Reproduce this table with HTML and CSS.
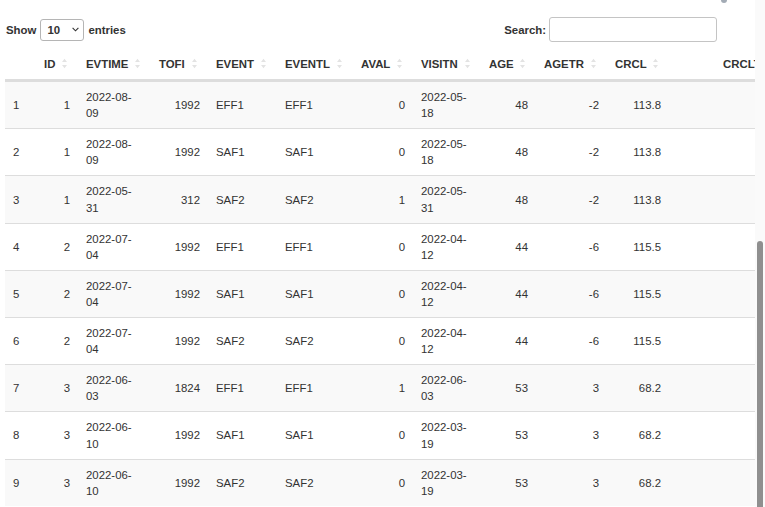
FILE: index.html
```html
<!DOCTYPE html>
<html lang="en">
<head>
<meta charset="utf-8">
<title>Data table</title>
<link rel="stylesheet" href="styles.css">
</head>
<body>
<div class="app">
  <main class="page">
    <div class="topline"><span class="blob"></span></div>
    <div class="controls">
      <label class="length">Show
        <span class="select"><span>10</span><svg width="7" height="5" viewBox="0 0 7 5"><path d="M0.6 0.8 L3.5 3.8 L6.4 0.8" fill="none" stroke="#333" stroke-width="1.1"/></svg></span>
        entries</label>
      <label class="filter">Search: <span class="input"></span></label>
    </div>
    <div class="scroll">
      <table class="dt">
        <colgroup>
          <col class="c-rn"><col class="c-id"><col class="c-evtime"><col class="c-tofi"><col class="c-event"><col class="c-eventl"><col class="c-aval"><col class="c-visitn"><col class="c-age"><col class="c-agetr"><col class="c-crcl"><col class="c-crcltr">
        </colgroup>
        <thead>
          <tr>
            <th class="rn"></th>
            <th>ID<svg class="sort" width="5" height="11" viewBox="0 0 5 11"><path d="M0 4 L2.5 0.8 L5 4Z M0 7 L2.5 10.2 L5 7Z"/></svg></th>
            <th>EVTIME<svg class="sort" width="5" height="11" viewBox="0 0 5 11"><path d="M0 4 L2.5 0.8 L5 4Z M0 7 L2.5 10.2 L5 7Z"/></svg></th>
            <th>TOFI<svg class="sort" width="5" height="11" viewBox="0 0 5 11"><path d="M0 4 L2.5 0.8 L5 4Z M0 7 L2.5 10.2 L5 7Z"/></svg></th>
            <th>EVENT<svg class="sort" width="5" height="11" viewBox="0 0 5 11"><path d="M0 4 L2.5 0.8 L5 4Z M0 7 L2.5 10.2 L5 7Z"/></svg></th>
            <th>EVENTL<svg class="sort" width="5" height="11" viewBox="0 0 5 11"><path d="M0 4 L2.5 0.8 L5 4Z M0 7 L2.5 10.2 L5 7Z"/></svg></th>
            <th>AVAL<svg class="sort" width="5" height="11" viewBox="0 0 5 11"><path d="M0 4 L2.5 0.8 L5 4Z M0 7 L2.5 10.2 L5 7Z"/></svg></th>
            <th>VISITN<svg class="sort" width="5" height="11" viewBox="0 0 5 11"><path d="M0 4 L2.5 0.8 L5 4Z M0 7 L2.5 10.2 L5 7Z"/></svg></th>
            <th>AGE<svg class="sort" width="5" height="11" viewBox="0 0 5 11"><path d="M0 4 L2.5 0.8 L5 4Z M0 7 L2.5 10.2 L5 7Z"/></svg></th>
            <th>AGETR<svg class="sort" width="5" height="11" viewBox="0 0 5 11"><path d="M0 4 L2.5 0.8 L5 4Z M0 7 L2.5 10.2 L5 7Z"/></svg></th>
            <th>CRCL<svg class="sort" width="5" height="11" viewBox="0 0 5 11"><path d="M0 4 L2.5 0.8 L5 4Z M0 7 L2.5 10.2 L5 7Z"/></svg></th>
            <th class="r">CRCLTR<svg class="sort" width="5" height="11" viewBox="0 0 5 11"><path d="M0 4 L2.5 0.8 L5 4Z M0 7 L2.5 10.2 L5 7Z"/></svg></th>
          </tr>
        </thead>
        <tbody>
          <tr><td>1</td><td class="r">1</td><td class="date">2022-08-<wbr>09</td><td class="r">1992</td><td>EFF1</td><td>EFF1</td><td class="r">0</td><td class="date">2022-05-<wbr>18</td><td class="r">48</td><td class="r">-2</td><td class="r">113.8</td><td class="r"></td></tr>
          <tr><td>2</td><td class="r">1</td><td class="date">2022-08-<wbr>09</td><td class="r">1992</td><td>SAF1</td><td>SAF1</td><td class="r">0</td><td class="date">2022-05-<wbr>18</td><td class="r">48</td><td class="r">-2</td><td class="r">113.8</td><td class="r"></td></tr>
          <tr><td>3</td><td class="r">1</td><td class="date">2022-05-<wbr>31</td><td class="r">312</td><td>SAF2</td><td>SAF2</td><td class="r">1</td><td class="date">2022-05-<wbr>31</td><td class="r">48</td><td class="r">-2</td><td class="r">113.8</td><td class="r"></td></tr>
          <tr><td>4</td><td class="r">2</td><td class="date">2022-07-<wbr>04</td><td class="r">1992</td><td>EFF1</td><td>EFF1</td><td class="r">0</td><td class="date">2022-04-<wbr>12</td><td class="r">44</td><td class="r">-6</td><td class="r">115.5</td><td class="r"></td></tr>
          <tr><td>5</td><td class="r">2</td><td class="date">2022-07-<wbr>04</td><td class="r">1992</td><td>SAF1</td><td>SAF1</td><td class="r">0</td><td class="date">2022-04-<wbr>12</td><td class="r">44</td><td class="r">-6</td><td class="r">115.5</td><td class="r"></td></tr>
          <tr><td>6</td><td class="r">2</td><td class="date">2022-07-<wbr>04</td><td class="r">1992</td><td>SAF2</td><td>SAF2</td><td class="r">0</td><td class="date">2022-04-<wbr>12</td><td class="r">44</td><td class="r">-6</td><td class="r">115.5</td><td class="r"></td></tr>
          <tr><td>7</td><td class="r">3</td><td class="date">2022-06-<wbr>03</td><td class="r">1824</td><td>EFF1</td><td>EFF1</td><td class="r">1</td><td class="date">2022-06-<wbr>03</td><td class="r">53</td><td class="r">3</td><td class="r">68.2</td><td class="r"></td></tr>
          <tr><td>8</td><td class="r">3</td><td class="date">2022-06-<wbr>10</td><td class="r">1992</td><td>SAF1</td><td>SAF1</td><td class="r">0</td><td class="date">2022-03-<wbr>19</td><td class="r">53</td><td class="r">3</td><td class="r">68.2</td><td class="r"></td></tr>
          <tr><td>9</td><td class="r">3</td><td class="date">2022-06-<wbr>10</td><td class="r">1992</td><td>SAF2</td><td>SAF2</td><td class="r">0</td><td class="date">2022-03-<wbr>19</td><td class="r">53</td><td class="r">3</td><td class="r">68.2</td><td class="r"></td></tr>
        </tbody>
      </table>
    </div>
  </main>
  <div class="vscroll"><div class="thumb"></div></div>
</div>
</body>
</html>
```

FILE: styles.css
```css
html, body {
  margin: 0;
  height: 100%;
  overflow: hidden;
  background: #fff;
}

body {
  font-family: "Liberation Sans", Arial, sans-serif;
  font-size: 11.4px;
  color: #333;
}

.app {
  display: flex;
  height: 507px;
}

.page {
  flex: none;
  width: 750px;
  padding-left: 5px;
}

.topline {
  height: 17px;
}

.blob {
  display: block;
  width: 6px;
  height: 3px;
  margin-left: 716px;
  background: #a3abb5;
  border-radius: 0 0 3px 3px;
}

.controls {
  display: flex;
  justify-content: space-between;
  align-items: center;
  height: 25px;
  padding-right: 38px;
}

.length {
  display: flex;
  align-items: center;
  gap: 4px;
  margin-left: 1px;
  font-weight: bold;
}

.select {
  display: flex;
  align-items: center;
  justify-content: space-between;
  box-sizing: border-box;
  width: 44px;
  height: 22px;
  padding: 0 4px 0 6px;
  border: 1px solid #b5b5b5;
  border-radius: 3px;
  background: #fff;
}

.filter {
  display: flex;
  align-items: center;
  gap: 3px;
  font-weight: bold;
}

.input {
  display: block;
  box-sizing: border-box;
  width: 168px;
  height: 25px;
  border: 1px solid #c4c4c4;
  border-radius: 3px;
  background: #fff;
}

.scroll {
  margin-top: 7px;
  width: 750px;
  overflow: hidden;
}

.dt {
  table-layout: fixed;
  width: 786px;
  border-collapse: separate;
  border-spacing: 0;
}

.c-rn { width: 31px; }
.c-id { width: 42px; }
.c-evtime { width: 73px; }
.c-tofi { width: 57px; }
.c-event { width: 69px; }
.c-eventl { width: 76px; }
.c-aval { width: 60px; }
.c-visitn { width: 68px; }
.c-age { width: 55px; }
.c-agetr { width: 71px; }
.c-crcl { width: 62px; }
.c-crcltr { width: 122px; }

.dt th {
  position: relative;
  padding: 7px 22px 7px 8px;
  line-height: 16.1px;
  font-weight: bold;
  text-align: left;
  white-space: nowrap;
  border-bottom: 2px solid #dddddd;
}

.dt th.r {
  text-align: right;
}

.dt .sort {
  position: absolute;
  right: 11px;
  top: 50%;
  margin-top: -6px;
  display: block;
  fill: #e3e3e3;
}

.dt td {
  padding: 7px 8px;
  line-height: 16.1px;
  border-top: 1px solid #dddddd;
  vertical-align: middle;
  text-align: left;
}

.dt td.r {
  text-align: right;
}

.dt td.date {
  padding-right: 12px;
}

.dt tbody tr:nth-child(odd) td {
  background: #f9f9f9;
}

.vscroll {
  flex: none;
  width: 10px;
  box-sizing: border-box;
  padding-top: 241px;
  background: #fafafa;
}

.thumb {
  width: 6px;
  height: 280px;
  margin-left: 2px;
  background: #8f8f8f;
  border-radius: 3px 3px 0 0;
}
```
